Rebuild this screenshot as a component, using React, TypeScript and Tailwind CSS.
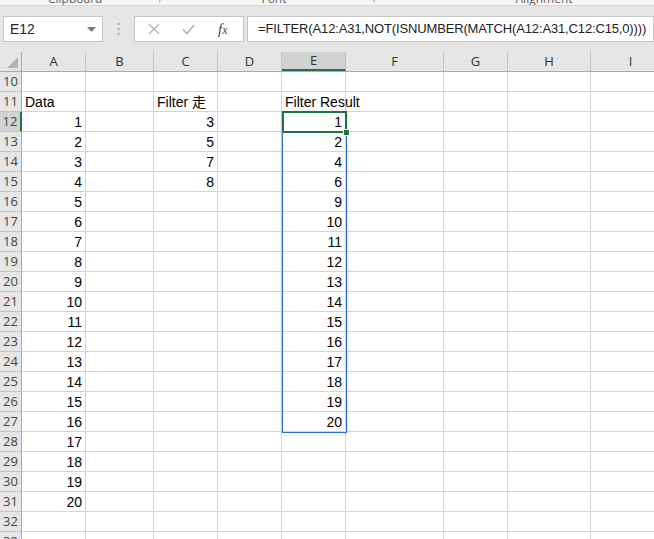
import React from "react";

// 열 너비 (px) - 스크린샷 기준
const columns = [
  { name: "A", width: 64 },
  { name: "B", width: 68 },
  { name: "C", width: 64 },
  { name: "D", width: 64 },
  { name: "E", width: 64 },
  { name: "F", width: 98 },
  { name: "G", width: 64 },
  { name: "H", width: 83 },
  { name: "I", width: 80 },
];

type CellValue = { text: string; num?: boolean };

// 시트 데이터: 행번호 -> 열 -> 값
const buildData = () => {
  const data: Record<number, Record<string, CellValue>> = {};
  const set = (row: number, col: string, v: CellValue) => {
    if (!data[row]) data[row] = {};
    data[row][col] = v;
  };
  set(11, "A", { text: "Data" });
  set(11, "C", { text: "Filter 走" });
  set(11, "E", { text: "Filter Result" });
  for (let i = 1; i <= 20; i++) set(11 + i, "A", { text: String(i), num: true });
  [3, 5, 7, 8].forEach((v, i) => set(12 + i, "C", { text: String(v), num: true }));
  const result = [1, 2, 4, 6, 9, 10, 11, 12, 13, 14, 15, 16, 17, 18, 19, 20];
  result.forEach((v, i) => set(12 + i, "E", { text: String(v), num: true }));
  return data;
};

const data = buildData();
const rows = Array.from({ length: 24 }, (_, i) => 10 + i);

const cellFont = { fontFamily: '"Liberation Sans", "Noto Sans CJK SC", sans-serif' };
const uiFont = { fontFamily: '"Open Sans", "Noto Sans", sans-serif' };

export default function App() {
  return (
    <div className="w-[654px] h-[539px] overflow-hidden bg-white relative" style={uiFont}>
      {/* 리본 그룹 라벨 (잘린 부분) */}
      <div className="h-[6px] bg-[#f6f6f6] border-b border-[#d6d6d6] overflow-hidden flex text-[12px] text-[#5e5e5e] leading-[12px]">
        <span className="ml-[48px] -mt-[7px]">Clipboard</span>
        <span className="ml-[56px] -mt-[7px] text-[#9a9a9a]">⌐</span>
        <span className="ml-[96px] -mt-[7px]">Font</span>
        <span className="ml-[86px] -mt-[7px] text-[#9a9a9a]">⌐</span>
        <span className="ml-[136px] -mt-[7px]">Alignment</span>
      </div>

      {/* 수식 입력줄 */}
      <div className="h-[46px] bg-[#e6e6e6] flex items-start pt-[10px]">
        <div className="ml-[3px] w-[100px] h-[26px] bg-white border border-[#c6c6c6] flex items-center justify-between pl-[6px] pr-[6px]">
          <span className="text-[14px] text-[#262626]" style={cellFont}>E12</span>
          <svg width="9" height="5" viewBox="0 0 9 5">
            <path d="M0 0 L9 0 L4.5 5 Z" fill="#7a7a7a" />
          </svg>
        </div>
        <div className="w-[31px] h-[26px] flex items-center justify-center">
          <svg width="3" height="12" viewBox="0 0 3 12">
            <rect x="0.5" y="0" width="2" height="2" fill="#a8a8a8" />
            <rect x="0.5" y="5" width="2" height="2" fill="#a8a8a8" />
            <rect x="0.5" y="10" width="2" height="2" fill="#a8a8a8" />
          </svg>
        </div>
        <div className="w-[110px] h-[26px] bg-white border border-[#c6c6c6] flex items-center">
          <svg className="ml-[13px]" width="12" height="12" viewBox="0 0 12 12">
            <path d="M1 1 L11 11 M11 1 L1 11" stroke="#b0b0b0" strokeWidth="1.3" />
          </svg>
          <svg className="ml-[22px]" width="13" height="11" viewBox="0 0 13 11">
            <path d="M1 5.5 L5 9.5 L12 1" stroke="#b0b0b0" strokeWidth="1.6" fill="none" />
          </svg>
          <span
            className="ml-[23px] text-[15px] italic text-[#444]"
            style={{ fontFamily: '"Liberation Serif", serif' }}
          >
            f<span className="text-[12px]">x</span>
          </span>
        </div>
        <div className="ml-[3px] flex-1 h-[26px] bg-white border border-[#c6c6c6] flex items-center pl-[10px] overflow-hidden">
          <span className="text-[13px] text-[#222] whitespace-nowrap tracking-[-0.15px]" style={cellFont}>
            =FILTER(A12:A31,NOT(ISNUMBER(MATCH(A12:A31,C12:C15,0))))
          </span>
        </div>
      </div>

      {/* 시트 영역 */}
      <div className="relative">
        {/* 열 머리글 */}
        <div className="flex h-[20px] bg-[#e6e6e6] border-b border-[#ababab]">
          <div className="w-[22px] shrink-0 border-r border-[#ababab] relative">
            <svg className="absolute right-[3px] bottom-[3px]" width="11" height="11" viewBox="0 0 11 11">
              <path d="M11 0 L11 11 L0 11 Z" fill="#b4b4b4" />
            </svg>
          </div>
          {columns.map((c) => (
            <div
              key={c.name}
              className={`shrink-0 flex items-center justify-center text-[13px] text-[#333] border-r border-[#c2c2c2] ${
                c.name === "E" ? "bg-[#d2d2d2] border-b-2 border-b-[#217346] text-[#1e1e1e]" : ""
              }`}
              style={{ width: c.width }}
            >
              {c.name}
            </div>
          ))}
        </div>

        {/* 행 */}
        {rows.map((r) => (
          <div key={r} className="flex h-[20px]">
            <div
              className={`w-[22px] shrink-0 flex items-center justify-center pt-[1px] text-[13px] text-[#444] border-b border-[#c2c2c2] ${
                r === 12
                  ? "bg-[#d2d2d2] border-r-2 border-r-[#217346] text-[#1e6b42]"
                  : "bg-[#e6e6e6] border-r border-r-[#ababab]"
              }`}
            >
              {r}
            </div>
            {columns.map((c) => {
              const v = data[r]?.[c.name];
              return (
                <div
                  key={c.name}
                  className={`shrink-0 border-r border-b border-[#d4d4d4] flex items-end px-[3px] text-[14px] text-black leading-[17px] whitespace-nowrap ${
                    v?.num ? "justify-end" : "justify-start"
                  }`}
                  style={{ width: c.width, ...cellFont }}
                >
                  {v?.text}
                </div>
              );
            })}
          </div>
        ))}

        {/* 스필 범위 (파란 테두리) */}
        <div className="absolute left-[282px] top-[60px] w-[65px] h-[321px] border border-[#2b6cd0] shadow-[0_0_4px_rgba(0,0,0,0.15)] pointer-events-none" />
        {/* 선택 셀 E12 */}
        <div className="absolute left-[282px] top-[59px] w-[65px] h-[22px] border-2 border-[#217346] pointer-events-none" />
        {/* 채우기 핸들 */}
        <div className="absolute left-[343px] top-[77px] w-[7px] h-[7px] bg-[#217346] border border-white pointer-events-none" />
      </div>
    </div>
  );
}
